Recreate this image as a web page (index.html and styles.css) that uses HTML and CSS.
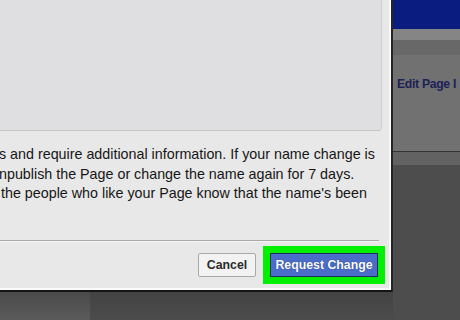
FILE: index.html
```html
<!DOCTYPE html>
<html lang="en">
<head>
    <meta charset="UTF-8">
    <meta name="viewport" content="width=device-width, initial-scale=1.0">
    <title>Change Page Name</title>
    <link rel="stylesheet" href="styles.css">
</head>
<body>
    <div class="screen">
        <div class="dialog">
            <div class="preview"></div>
            <div class="message">
                <p class="line line-one">s and require additional information. If your name change is</p>
                <p class="line line-two">npublish the Page or change the name again for 7 days.</p>
                <p class="line line-three">the people who like your Page know that the name's been</p>
            </div>
            <div class="divider"></div>
            <div class="actions">
                <button class="btn-cancel">Cancel</button>
                <div class="highlight">
                    <button class="btn-request">Request Change</button>
                </div>
            </div>
        </div>
        <div class="side">
            <div class="side-nav"></div>
            <div class="side-band"></div>
            <div class="side-tools">
                <span class="side-link">Edit Page I</span>
            </div>
            <div class="side-rule"></div>
            <div class="side-lower"></div>
        </div>
        <div class="under">
            <div class="under-left"></div>
            <div class="under-right"></div>
        </div>
    </div>
</body>
</html>
```

FILE: styles.css
```css
body {
    margin: 0;
    font-family: "Liberation Sans", Arial, sans-serif;
    background-color: #4b4b4b;
    overflow: hidden;
}
.screen {
    display: grid;
    grid-template-columns: 393px 1fr;
    grid-template-rows: 292px 28px;
    width: 460px;
    height: 320px;
}
.dialog {
    grid-column: 1;
    grid-row: 1;
    background-color: #e8e8e8;
    border-right: 2px solid #262626;
    border-bottom: 2px solid #151515;
    box-shadow: inset -2px -2px 0 #fafafa;
    display: flex;
    flex-direction: column;
}
.preview {
    height: 130px;
    margin-right: 9px;
    background-color: #dfdfe1;
    border-right: 1px solid #cfcfd1;
    border-bottom: 1px solid #c6c6c8;
    border-bottom-right-radius: 4px;
}
.message {
    margin-top: 14px;
    color: #161616;
    font-size: 14.3px;
    line-height: 19.6px;
}
.line {
    margin: 0;
    white-space: nowrap;
}
.line-one {
    text-indent: -1px;
}
.line-two {
    text-indent: -1px;
}
.line-three {
    text-indent: 1px;
}
.divider {
    margin-top: 36px;
    margin-right: 12px;
    height: 1px;
    background-color: #a8a8a8;
    border-bottom: 1px solid #f6f6f6;
}
.actions {
    display: flex;
    justify-content: flex-end;
    align-items: center;
    gap: 7px;
    margin-top: 4px;
    padding-right: 6px;
}
.btn-cancel {
    width: 58px;
    height: 24px;
    padding: 0;
    font-family: inherit;
    font-size: 12.3px;
    font-weight: bold;
    color: #2b2b2b;
    background-color: #f2f2f2;
    border: 1px solid #a9a9a9;
    border-radius: 2px;
}
.highlight {
    background-color: #00f000;
    padding: 7px 7px;
    display: flex;
}
.btn-request {
    width: 108px;
    height: 24px;
    padding: 0;
    font-family: inherit;
    font-size: 12.3px;
    font-weight: bold;
    color: #ffffff;
    background-color: #4a6dc8;
    border: 1px solid #1d2c63;
    text-shadow: 0 0 1px #1d2c63;
}
.side {
    grid-column: 2;
    grid-row: 1 / 3;
    display: flex;
    flex-direction: column;
    background-color: #4d4d4d;
}
.side-nav {
    height: 29px;
    background-color: #0b1c80;
}
.side-band {
    height: 11px;
    background-color: #858585;
    border-bottom: 15px solid #686868;
}
.side-tools {
    height: 96px;
    background-color: #717171;
    padding: 19px 0 0 4px;
    box-sizing: border-box;
}
.side-link {
    font-size: 12.2px;
    font-weight: bold;
    letter-spacing: -0.3px;
    color: #1c2156;
    white-space: nowrap;
}
.side-rule {
    height: 1px;
    background-color: #333333;
}
.side-lower {
    height: 13px;
    background-color: #626262;
}
.under {
    grid-column: 1;
    grid-row: 2;
    display: flex;
}
.under-left {
    width: 90px;
    background: linear-gradient(#4a4a4a, #5b5b5b);
}
.under-right {
    flex: 1;
    background: linear-gradient(#434343, #4c4c4c);
}
```
